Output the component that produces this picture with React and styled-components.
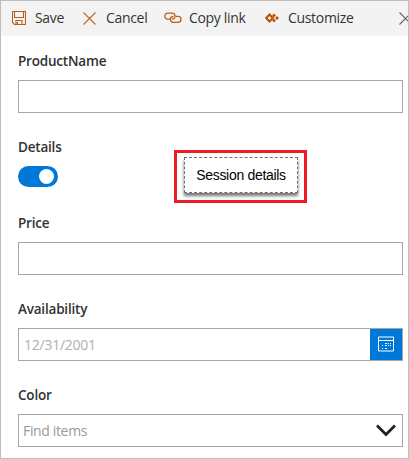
import React from "react";
import styled, { createGlobalStyle } from "styled-components";

const Global = createGlobalStyle`
  *, *::before, *::after { box-sizing: border-box; }
  body { margin: 0; background: #fff; overflow: hidden; }
`;

const Panel = styled.div`
  width: 409px;
  height: 459px;
  border: 1px solid #bdbdbd;
  background: #fff;
  overflow: hidden;
  font-family: "Open Sans", "Noto Sans", sans-serif;
  font-size: 14px;
  color: #333;
`;

const Toolbar = styled.header`
  display: flex;
  height: 35px;
  background: #f3f3f3;
  overflow: hidden;
`;

const Command = styled.button`
  display: flex;
  align-items: center;
  flex: none;
  width: ${(p) => p.$width}px;
  height: 34px;
  padding: 0 0 0 11px;
  border: 0;
  background: none;
  color: #333;
  font: inherit;
  letter-spacing: -0.32px;
  white-space: nowrap;
  svg { flex: none; }
`;

const CommandText = styled.span`
  margin-left: ${(p) => p.$gap}px;
  line-height: 20px;
`;

const Form = styled.main`
  padding: 0 5px 0 17px;
`;

const Field = styled.section`
  height: ${(p) => p.$height || 86}px;
  padding-top: 15px;
`;

const Label = styled.label`
  display: block;
  height: 29px;
  line-height: 20px;
  font-size: 13.5px;
  font-weight: 600;
  letter-spacing: -0.2px;
`;

const InputBox = styled.div`
  display: flex;
  align-items: center;
  justify-content: space-between;
  height: 33px;
  border: 1px solid #a6a6a6;
  padding-left: ${(p) => p.$inset || 5}px;
`;

const Placeholder = styled.span`
  color: ${(p) => p.$color};
  letter-spacing: ${(p) => p.$spacing}px;
  line-height: 20px;
`;

const CalendarButton = styled.button`
  display: flex;
  align-items: center;
  justify-content: center;
  width: 32px;
  height: 31px;
  padding: 0 0 1px;
  border: 0;
  background: #0078d7;
`;

const ArrowSlot = styled.span`
  display: flex;
  margin: 0 6px 1px 0;
`;

const DetailsRow = styled.div`
  display: flex;
`;

const DetailsToggle = styled.div`
  width: 156px;
`;

const Switch = styled.div`
  display: flex;
  align-items: center;
  justify-content: flex-end;
  width: 40px;
  height: 21px;
  padding-right: 4px;
  border-radius: 11px;
  background: #0078d7;
`;

const Knob = styled.span`
  width: 15px;
  height: 15px;
  border-radius: 50%;
  background: #fff;
`;

const Highlight = styled.div`
  width: 133px;
  height: 53px;
  margin-top: 13px;
  padding: 4px 0 0 7px;
  border: 3px solid #ed1c24;
`;

const SessionButton = styled.button`
  display: block;
  width: 114px;
  height: 36px;
  padding: 0;
  border: 1px dashed #6f6f6f;
  background: #fff;
  box-shadow: 0 3px 3px #777;
  color: #000;
  font-family: "Liberation Sans", Arial, sans-serif;
  font-size: 14px;
  letter-spacing: -0.3px;
  line-height: 32px;
  white-space: nowrap;
`;

const SaveIcon = () => (
  <svg width="14" height="14" viewBox="0 0 14 14" fill="none" stroke="#b8601a" strokeWidth="1.1">
    <path d="M.5.5h13v13h-11l-2-2zM2.5.5v6h9v-6M4 13.5v-4h6v4M5.5 11v2.5" />
  </svg>
);

const CrossIcon = ({ color }) => (
  <svg width="13" height="13" viewBox="0 0 13 13" fill="none" stroke={color} strokeWidth="1.2">
    <path d="M.5.5l12 12M12.5.5l-12 12" />
  </svg>
);

const LinkIcon = () => (
  <svg width="18" height="12" viewBox="0 0 18 12" fill="none" stroke="#b8601a" strokeWidth="1.3">
    <path d="M6 7.2H3.8a3 3 0 0 1 0-6H8a3 3 0 0 1 0 6" />
    <path d="M12 4.3h2a3 3 0 0 1 0 6H9.4a3 3 0 0 1 0-6" />
  </svg>
);

const CustomizeIcon = () => (
  <svg width="14" height="10" viewBox="0 0 14 10">
    <path d="M4.5 1.5L7.8 5 4.5 8.5 1.2 5z" fill="none" stroke="#b85208" strokeWidth="2" />
    <path
      d="M9 .6l1.9 1.9L9 4.4 7.1 2.5zM9 5.6l1.9 1.9L9 9.4 7.1 7.5zM12 3.1L13.9 5 12 6.9 10.1 5z"
      fill="#b85208"
    />
  </svg>
);

const CalendarIcon = () => (
  <svg width="16" height="16" viewBox="0 0 16 16">
    <path d="M.5 1h15v14H.5zM.5 4.5h15" fill="none" stroke="#fff" />
    <path d="M7 7h2v1H7zM10 7h1v1h-1zM12 7h1v1h-1zM4 9h1v1H4zM7 9h2v1H7zM10 9h1v1h-1zM12 9h1v1h-1zM4 12h1v1H4zM7 12h2v1H7z" fill="#fff" />
  </svg>
);

const ChevronIcon = () => (
  <svg width="20" height="13" viewBox="0 0 20 13" fill="none" stroke="#222" strokeWidth="2.8">
    <path d="M1 1.5l9 9 9-9" />
  </svg>
);

export default function App() {
  return (
    <>
      <Global />
      <Panel>
        <Toolbar>
          <Command $width={71}><SaveIcon /><CommandText $gap={9}>Save</CommandText></Command>
          <Command $width={81}><CrossIcon color="#c06a2c" /><CommandText $gap={10}>Cancel</CommandText></Command>
          <Command $width={101}><LinkIcon /><CommandText $gap={7}>Copy link</CommandText></Command>
          <Command $width={134}><CustomizeIcon /><CommandText $gap={9}>Customize</CommandText></Command>
          <Command $width={30}><CrossIcon color="#666" /></Command>
        </Toolbar>
        <Form>
          <Field><Label>ProductName</Label><InputBox /></Field>
          <Field $height={76}>
            <DetailsRow>
              <DetailsToggle>
                <Label>Details</Label>
                <Switch role="switch" aria-checked="true"><Knob /></Switch>
              </DetailsToggle>
              <Highlight><SessionButton>Session details</SessionButton></Highlight>
            </DetailsRow>
          </Field>
          <Field><Label>Price</Label><InputBox /></Field>
          <Field>
            <Label>Availability</Label>
            <InputBox>
              <Placeholder $color="#b0b0b0" $spacing={-0.25}>12/31/2001</Placeholder>
              <CalendarButton aria-label="Open calendar"><CalendarIcon /></CalendarButton>
            </InputBox>
          </Field>
          <Field>
            <Label>Color</Label>
            <InputBox $inset={4}>
              <Placeholder $color="#999" $spacing={-0.35}>Find items</Placeholder>
              <ArrowSlot><ChevronIcon /></ArrowSlot>
            </InputBox>
          </Field>
        </Form>
      </Panel>
    </>
  );
}
